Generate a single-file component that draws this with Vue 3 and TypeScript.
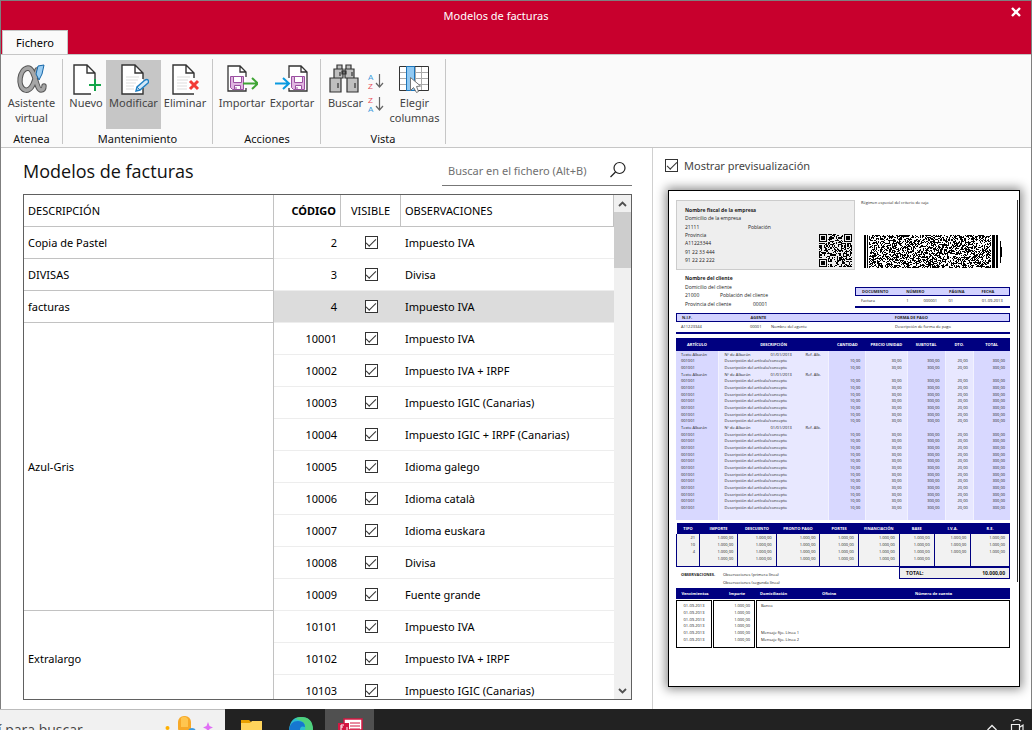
<script setup lang="ts">
import { ref } from 'vue'

interface Model { code: number; notes: string; group?: string; span?: number }

const models = ref<Model[]>([
  { code: 2, notes: 'Impuesto IVA', group: 'Copia de Pastel', span: 1 },
  { code: 3, notes: 'Divisa', group: 'DIVISAS', span: 1 },
  { code: 4, notes: 'Impuesto IVA', group: 'facturas', span: 1 },
  { code: 10001, notes: 'Impuesto IVA', group: 'Azul-Gris', span: 9 },
  { code: 10002, notes: 'Impuesto IVA + IRPF' },
  { code: 10003, notes: 'Impuesto IGIC (Canarias)' },
  { code: 10004, notes: 'Impuesto IGIC + IRPF (Canarias)' },
  { code: 10005, notes: 'Idioma galego' },
  { code: 10006, notes: 'Idioma català' },
  { code: 10007, notes: 'Idioma euskara' },
  { code: 10008, notes: 'Divisa' },
  { code: 10009, notes: 'Fuente grande' },
  { code: 10101, notes: 'Impuesto IVA', group: 'Extralargo', span: 3 },
  { code: 10102, notes: 'Impuesto IVA + IRPF' },
  { code: 10103, notes: 'Impuesto IGIC (Canarias)' },
])
const selected = ref(4)
const showPreview = ref(true)
const query = ref('')

const deliveryRows = [0, 3, 11]
const lines = Array.from({ length: 24 }, (_, i) => ({ id: i, delivery: deliveryRows.includes(i) }))

const totalHeads = ['TIPO', 'IMPORTE', 'DESCUENTO', 'PRONTO PAGO', 'PORTES', 'FINANCIACIÓN', 'BASE', 'I.V.A.', 'R.E.']
const totalRows = ['21', '10', '4', ''].map((rate) => [
  rate, ...Array(6).fill('1.000,00'), rate ? '1.000,00' : '', rate ? '1.000,00' : '',
] as string[])
const dues = ['Banco', '', '', '', 'Mensaje fijo. Línea 1', 'Mensaje fijo. Línea 2']

function noise(seed: number) {
  let s = seed
  return () => {
    s = (s * 1103515245 + 12345) % 2147483648
    return s / 2147483648
  }
}

function qrPath(n: number): string {
  const rnd = noise(77)
  let d = ''
  for (let y = 0; y < n; y++) {
    for (let x = 0; x < n; x++) {
      const on = rnd() > 0.48
      const corner = (x < 8 && y < 8) || (x > n - 9 && y < 8) || (x < 8 && y > n - 9)
      if (on && !corner) d += `M${x} ${y}h1v1h-1z`
    }
  }
  for (const [a, b] of [[0, 0], [n - 7, 0], [0, n - 7]]) {
    d += `M${a} ${b}h7v1h-7zM${a} ${b + 6}h7v1h-7zM${a} ${b}h1v7h-1zM${a + 6} ${b}h1v7h-1zM${a + 2} ${b + 2}h3v3h-3z`
  }
  return d
}

function stackedBarcode(): string {
  const rnd = noise(1234)
  let d = 'M0 0h2v33h-2zM3 0h1v33h-1zM128 0h3v33h-3zM132 0h2v33h-2zM136 6h1v22h-1zM137 12h1v10h-1z'
  for (let y = 0; y < 33; y++) {
    for (let x = 5; x < 127; x++) if (rnd() > 0.5) d += `M${x} ${y}h1v1h-1z`
  }
  return d
}
const qr = qrPath(29)
const barcode = stackedBarcode()
</script>

<template>
  <div class="screen">
    <div class="window">
      <header class="titlebar">
        <h1>Modelos de facturas</h1>
        <button class="close" aria-label="Cerrar">
          <svg width="10" height="10" viewBox="0 0 10 10"><path d="M1 1l8 8M9 1l-8 8" stroke="#fff" stroke-width="2.4" /></svg>
        </button>
        <button class="tab">Fichero</button>
      </header>

      <nav class="ribbon">
        <section class="group">
          <div class="tools">
            <button class="tool assistant">
              <svg width="32" height="32" viewBox="0 0 32 32" fill="none">
                <path d="M21 7C18 25 13 28 9 27 1 24 3 6 12 5c7 0 8 22 13 22 2 0 3-1 3-4" stroke="#555" stroke-width="5.4" stroke-linecap="round" />
                <path d="M21 7C18 25 13 28 9 27 1 24 3 6 12 5c7 0 8 22 13 22 2 0 3-1 3-4" stroke="#a6a6a6" stroke-width="3.4" stroke-linecap="round" />
                <path d="M22 3l6-1-2 9-3 6-3-6z" fill="#9bcdf2" stroke="#1667a8" />
              </svg>
              <span>Asistente virtual</span>
            </button>
          </div>
          <h2>Atenea</h2>
        </section>

        <section class="group">
          <div class="tools">
            <button class="tool new">
              <svg width="30" height="32" viewBox="0 0 30 32" fill="none">
                <path d="M3 2h13l8 8v21H3z" fill="#fff" />
                <path d="M24 16v-6l-8-8H3v29h17M16 2v8h8" stroke="#333" stroke-width="1.4" />
                <path d="M24 16v12M18 22h12" stroke="#13a549" stroke-width="2" />
              </svg>
              <span>Nuevo</span>
            </button>
            <button class="tool edit active">
              <svg width="30" height="32" viewBox="0 0 30 32" fill="none">
                <path d="M3 2h13l8 8v21H3z" fill="#fff" />
                <path d="M24 16v-6l-8-8H3v29h21v-6M16 2v8h8" stroke="#333" stroke-width="1.4" />
                <path d="M7 14h13M7 17h12M7 20h10M7 23h8M7 26h8" stroke="#ddd" />
                <path d="M17 28l1-4 8-7q2-1 3 0 1 2 0 3l-8 7z" fill="#d4e8f8" stroke="#1d7fc3" stroke-width="1.4" />
                <path d="M18 24l3 3" stroke="#1d7fc3" />
              </svg>
              <span>Modificar</span>
            </button>
            <button class="tool remove">
              <svg width="30" height="32" viewBox="0 0 30 32" fill="none">
                <path d="M3 2h13l8 8v21H3z" fill="#fff" />
                <path d="M24 15v-5l-8-8H3v29h21M16 2v8h8" stroke="#333" stroke-width="1.4" />
                <path d="M7 14h13M7 17h11M7 20h10M7 23h10M7 26h10" stroke="#ddd" />
                <path d="M20 18l8 8M28 18l-8 8" stroke="#f23b35" stroke-width="3" />
              </svg>
              <span>Eliminar</span>
            </button>
          </div>
          <h2>Mantenimiento</h2>
        </section>

        <section class="group actions">
          <div class="tools">
            <button class="tool wide">
              <svg width="32" height="32" viewBox="0 0 32 32" fill="none">
                <path d="M2 3h12l6 6v19H2z" fill="#fff" />
                <path d="M20 14V9l-6-6H2v25h18v-3M14 3v6h6" stroke="#333" stroke-width="1.3" />
                <path d="M4.500 13.500h13v13h-11l-2-2z" fill="#e0b5e0" stroke="#9a4fa0" />
                <path d="M7.500 13.500h8v6h-8zM8.500 22.500h6v4h-6z" fill="#fff" stroke="#9a4fa0" /><path d="M10 24v2" stroke="#9a4fa0" />
                <path d="M17 20.500h14M26 15l6 5.500-6 5.500" stroke="#3fa535" stroke-width="2" />
              </svg>
              <span>Importar</span>
            </button>
            <button class="tool wide">
              <svg width="34" height="32" viewBox="0 0 34 32" fill="none">
                <path d="M14 3h12l6 6v19H14z" fill="#fff" />
                <path d="M14 15V3h12l6 6v19H14v-3M26 3v6h6" stroke="#333" stroke-width="1.3" />
                <path d="M16.500 13.500h13v13h-11l-2-2z" fill="#e0b5e0" stroke="#9a4fa0" />
                <path d="M19.500 13.500h8v6h-8zM20.500 22.500h6v4h-6z" fill="#fff" stroke="#9a4fa0" /><path d="M22 24v2" stroke="#9a4fa0" />
                <path d="M0 20.500h13M8 15l6 5.500-6 5.500" stroke="#0a9ae0" stroke-width="2" />
              </svg>
              <span>Exportar</span>
            </button>
          </div>
          <h2>Acciones</h2>
        </section>

        <section class="group">
          <div class="tools">
            <button class="tool find">
              <svg width="35" height="32" viewBox="0 0 35 32" fill="#bfbfbf" stroke="#333" stroke-width="1.2">
                <path d="M9 2h5v4H9zM18 2h5v4h-5zM6 6h9v9H6zM17 6h9v9h-9zM14 8h4v3h-4zM2 15h11v14H2zM19 15h11v14H19zM10 20v5M27 20v5M12 9v4M24 9v4" />
              </svg>
              <span>Buscar</span>
            </button>
            <div class="sorts">
              <button aria-label="Orden ascendente">
                <svg width="18" height="21" viewBox="0 0 18 21"><text x="1" y="9" fill="#3d9bdc">A</text><text x="1" y="18" fill="#e8505b">Z</text><path d="M12.500 3v13M9 12l3.500 4 3.500-4" fill="none" stroke="#666" stroke-width="1.2" /></svg>
              </button>
              <button aria-label="Orden descendente">
                <svg width="18" height="21" viewBox="0 0 18 21"><text x="1" y="9" fill="#e8505b">Z</text><text x="1" y="18" fill="#3d9bdc">A</text><path d="M12.500 3v13M9 12l3.500 4 3.500-4" fill="none" stroke="#666" stroke-width="1.2" /></svg>
              </button>
            </div>
            <button class="tool columns">
              <svg width="34" height="32" viewBox="0 0 34 32" fill="none">
                <path d="M1.500 3.500h29v24h-29z" fill="#fff" />
                <path d="M2 9.500h28M2 15.500h28M2 21.500h28M23.500 4v23M17.500 4v23" stroke="#aaa" />
                <path d="M1.500 3.500h29v24h-29z" stroke="#333" />
                <path d="M8.500 3.500h8v24h-8z" fill="#91c9f2" stroke="#1b75bb" />
                <path d="M12.500 14.500v13l3-3 3 5 2-1-2-5 4-.5z" fill="#fff" stroke="#777" />
              </svg>
              <span>Elegir columnas</span>
            </button>
          </div>
          <h2>Vista</h2>
        </section>
      </nav>

      <main class="content">
        <section class="list">
          <div class="list-head">
            <h3>Modelos de facturas</h3>
            <label class="search">
              <input v-model="query" type="text" placeholder="Buscar en el fichero (Alt+B)" aria-label="Buscar en el fichero" />
              <svg width="18" height="18" viewBox="0 0 18 18" fill="none" stroke="#222"><circle cx="10.500" cy="7" r="5.500" stroke-width="1.2" /><path d="M6.500 11l-5 5" stroke-width="1.3" /></svg>
            </label>
          </div>
          <div class="grid-box">
            <div class="grid-view">
              <table class="models">
                <colgroup><col class="c-desc" /><col class="c-code" /><col class="c-vis" /><col /></colgroup>
                <thead>
                  <tr><th>DESCRIPCIÓN</th><th class="code sorted">CÓDIGO</th><th class="vis">VISIBLE</th><th>OBSERVACIONES</th></tr>
                </thead>
                <tbody>
                  <tr v-for="m in models" :key="m.code" :class="{ selected: m.code === selected }" @click="selected = m.code">
                    <td v-if="m.group" :rowspan="m.span" class="desc">{{ m.group }}</td>
                    <td class="code">{{ m.code }}</td>
                    <td class="vis"><input type="checkbox" checked :aria-label="'Visible ' + m.code" /></td>
                    <td>{{ m.notes }}</td>
                  </tr>
                </tbody>
              </table>
            </div>
            <div class="scrollbar">
              <button aria-label="Subir"><svg width="9" height="6" viewBox="0 0 9 6"><path d="M1 5l3.500-3.500L8 5" fill="none" stroke="#505050" stroke-width="1.8" /></svg></button>
              <div class="track"><div class="thumb"></div></div>
              <button aria-label="Bajar"><svg width="9" height="6" viewBox="0 0 9 6"><path d="M1 1l3.500 3.500L8 1" fill="none" stroke="#505050" stroke-width="1.8" /></svg></button>
            </div>
          </div>
        </section>

        <aside class="preview">
          <label class="toggle"><input v-model="showPreview" type="checkbox" />Mostrar previsualización</label>
          <article v-if="showPreview" class="sheet">
            <div class="top">
              <div class="parties">
                <div class="company">
                  <b>Nombre fiscal de la empresa</b>
                  <span>Domicilio de la empresa</span>
                  <span class="pair"><i>21111</i><i>Población</i></span>
                  <span>Provincia</span>
                  <span>A11223344</span>
                  <span>91 22 33 444</span>
                  <span>91 22 22 222</span>
                  <svg class="qr" viewBox="0 0 29 29" shape-rendering="crispEdges"><path :d="qr" /></svg>
                </div>
                <div class="client">
                  <b>Nombre del cliente</b>
                  <span>Domicilio del cliente</span>
                  <span class="pair near"><i>21000</i><i>Población del cliente</i></span>
                  <span class="pair far"><i>Provincia del cliente</i><i>00001</i></span>
                </div>
              </div>
              <div class="document">
                <p class="regime">Régimen especial del criterio de caja</p>
                <svg class="barcode" viewBox="0 0 138 33" preserveAspectRatio="none" shape-rendering="crispEdges"><path :d="barcode" /></svg>
                <div class="strip doc-cols"><b>DOCUMENTO</b><b>NÚMERO</b><b></b><b>PÁGINA</b><b>FECHA</b></div>
                <div class="values doc-cols"><span>Factura</span><span>1</span><span>000001</span><span>01</span><span>01-09-2013</span></div>
              </div>
            </div>
            <div class="strip tax-cols"><b>N.I.F.</b><b>AGENTE</b><b></b><b>FORMA DE PAGO</b></div>
            <div class="values tax-cols"><span>A11223344</span><span>00001</span><span>Nombre del agente</span><span>Descripción de forma de pago</span></div>

            <table class="items">
              <colgroup><col class="i1" /><col class="i2" /><col class="i3" /><col class="i4" /><col class="i5" /><col class="i6" /><col class="i7" /></colgroup>
              <thead><tr><th>ARTÍCULO</th><th>DESCRIPCIÓN</th><th>CANTIDAD</th><th>PRECIO UNIDAD</th><th>SUBTOTAL</th><th>DTO.</th><th>TOTAL</th></tr></thead>
              <tbody>
                <tr v-for="l in lines" :key="l.id">
                  <template v-if="l.delivery">
                    <td>Texto Albarán</td><td><span class="delivery"><i>Nº de Albarán</i><i>01/01/2013</i><i>Ref. Alb.</i></span></td><td></td><td></td><td></td><td></td><td></td>
                  </template>
                  <template v-else>
                    <td>001001</td><td>Descripción del artículo/concepto</td><td>10,00</td><td>30,00</td><td>300,00</td><td>20,00</td><td>300,00</td>
                  </template>
                </tr>
              </tbody>
              <tfoot><tr><td v-for="n in 7" :key="n"></td></tr></tfoot>
            </table>

            <table class="totals">
              <colgroup><col class="t1" /><col class="t2" /><col class="t2" /><col class="t3" /><col class="t2" /><col class="t4" /><col class="t5" /><col class="t6" /><col class="t7" /></colgroup>
              <thead><tr><th v-for="h in totalHeads" :key="h">{{ h }}</th></tr></thead>
              <tbody><tr v-for="(r, i) in totalRows" :key="i"><td v-for="(c, j) in r" :key="j">{{ c }}</td></tr></tbody>
              <tfoot><tr><td v-for="n in 9" :key="n"></td></tr></tfoot>
            </table>
            <div class="summary">
              <div class="remarks"><b>OBSERVACIONES.</b><span>Observaciones (primera línea)</span><span>Observaciones (segunda línea)</span></div>
              <div class="grand"><span>TOTAL:</span><span>10.000,00</span></div>
            </div>

            <div class="dues">
              <div class="dues-head"><b>Vencimientos</b><b>Importe</b><b>Domiciliación</b><b>Oficina</b><b>Número de cuenta</b></div>
              <div class="dues-body">
                <div class="dates"><span v-for="(d, i) in dues" :key="i">01-09-2013</span></div>
                <div class="amounts"><span v-for="(d, i) in dues" :key="i">1.000,00</span></div>
                <div class="bank"><span v-for="(d, i) in dues" :key="i">{{ d }}</span></div>
              </div>
            </div>
            <div class="edge"></div>
          </article>
        </aside>
      </main>
    </div>

    <footer class="taskbar">
      <div class="task-search">
        <span>í para buscar</span>
        <svg width="50" height="22" viewBox="0 0 50 22">
          <circle cx="3.500" cy="18" r="2" fill="#ffb000" />
          <rect x="14" y="6" width="13" height="18" rx="6" fill="#f7a928" /><path d="M17 8q4-3 7 1v8h-7z" fill="#ffc64f" />
          <circle cx="28" cy="22" r="4" fill="#3d9be0" />
          <path d="M44 12l1.500 4 3.500 1.500-3.500 1.500-1.500 4-1.500-4-3.500-1.500 3.500-1.500z" fill="#e06ef5" />
        </svg>
      </div>
      <button class="task" aria-label="Explorador de archivos">
        <svg width="24" height="21" viewBox="0 0 24 21"><path d="M1 11h8l2 2v8H1z" fill="#e8a000" /><path d="M1 14h9l2-2h10v9H1z" fill="#ffd45c" /></svg>
      </button>
      <button class="task" aria-label="Edge">
        <svg width="26" height="21" viewBox="0 0 26 21"><path d="M1 21Q2 8 13 8t12 13z" fill="#2dbdd0" /><path d="M13 8q12 0 12 13h-8q2-9-10-11 2-2 6-2z" fill="#4fd17c" /><path d="M1 21q1-9 9-9 7 0 7 6-5-2-5 3z" fill="#1677d0" /></svg>
      </button>
      <button class="task current" aria-label="Facturas">
        <svg width="26" height="21" viewBox="0 0 26 21"><path d="M7 10h18v11H7z" fill="#fff" stroke="#d31742" stroke-width="1.5" /><path d="M13 14h10M13 17h10M13 20h10" stroke="#d31742" /><path d="M1 14h11v7H1z" fill="#d31742" /><path d="M7 16H4v5M4 18h2M10 21v-3" stroke="#fff" fill="none" /></svg>
      </button>
      <div class="tray">
        <svg width="12" height="21" viewBox="0 0 12 21" fill="none" stroke="#eee"><path d="M1.500 21L6 16.500l4.500 4.500" stroke-width="1.3" /></svg>
        <svg width="14" height="21" viewBox="0 0 14 21" fill="none" stroke="#eee"><path d="M3 12q4-3 8 0M1.500 15.500h8v7h-8zM10 18l3-2v6" stroke-width="1.2" /></svg>
      </div>
    </footer>
  </div>
</template>

<style>
body { margin: 0; overflow: hidden; }
</style>

<style scoped>
* { box-sizing: border-box; }
h1, h2, h3, p { margin: 0; font-weight: 400; }
button { font: inherit; color: inherit; background: none; border: 0; padding: 0; }
i { font-style: normal; }
.screen { height: 100vh; display: flex; flex-direction: column; font: 11px/15px "Noto Sans", "Open Sans", sans-serif; color: #111; background: #fff; }
.window { flex: 1; min-height: 0; display: flex; flex-direction: column; border: 1px solid #7f7f7f; border-bottom: 0; }

.titlebar { background: #c8002d; display: grid; grid-template-columns: 1fr 30px; color: #fff; }
.titlebar h1 { font-size: 11px; line-height: 29px; text-align: center; padding-right: 10px; }
.close { height: 22px; display: grid; place-items: center; }
.tab { justify-self: start; width: 66px; height: 24px; margin-left: 1px; background: #fafafa; border: 1px solid #c6c6c6; border-bottom: 0; color: #000; }

.ribbon { display: flex; height: 94px; background: #fafafa; border-top: 1px solid #c6c6c6; border-bottom: 1px solid #c6c6c6; padding-top: 4px; }
.group { height: 85px; padding: 1px 3px 0; border-right: 1px solid #c6c6c6; display: flex; flex-direction: column; justify-content: space-between; }
.group h2 { font-size: 11px; line-height: 16px; text-align: center; margin-bottom: -3px; }
.actions { padding-left: 4px; }
.tools { display: flex; height: 69px; }
.tool { display: flex; flex-direction: column; align-items: center; color: #444; padding-top: 3px; }
.tool span { line-height: 15px; }
.tool.active { background: #c6c6c6; }
.assistant, .edit, .columns { width: 55px; }
.new { width: 40px; }
.remove { width: 48px; }
.wide { width: 50px; }
.find { width: 43px; }
.sorts { width: 20px; display: flex; flex-direction: column; gap: 2px; padding-top: 11px; }
.sorts svg { display: block; }
.sorts text { font: 8px "Liberation Sans", sans-serif; }

.content { flex: 1; min-height: 0; display: grid; grid-template-columns: 652fr 378fr; }
.list { padding: 3px 20px 9px 22px; display: flex; flex-direction: column; min-height: 0; border-right: 1px solid #d0d0d0; }
.list-head { display: flex; justify-content: space-between; align-items: center; height: 39px; margin-bottom: 4px; }
.list-head h3 { font: 18px/26px "Open Sans", sans-serif; }
.search { display: flex; align-items: center; width: 190px; height: 30px; border-bottom: 1px solid #777; padding: 0 5px 0 6px; }
.search input { flex: 1; min-width: 0; border: 0; padding: 0; outline: 0; background: none; font: inherit; }
.search input::placeholder { color: #707070; opacity: 1; }
.grid-box { flex: 1; min-height: 0; display: flex; border: 1px solid #606060; }
.grid-view { flex: 1; overflow: hidden; }
.models { width: 100%; border-collapse: separate; border-spacing: 0; table-layout: fixed; line-height: 16px; color: #000; }
.c-desc { width: 250px; }
.c-code { width: 67px; }
.c-vis { width: 60px; }
.models th, .models td { height: 32px; padding: 0 4px; text-align: left; font-weight: 400; border-bottom: 1px solid #ededed; white-space: nowrap; }
.models th, .models .desc { border-bottom: 1px solid #c2c2c2; border-right: 1px solid #c2c2c2; background: #fff; }
.models .code { text-align: right; }
.models .sorted { font-weight: 700; }
.models .vis { text-align: center; }
.models .selected td:not(.desc) { background: #dcdcdc; }
input[type="checkbox"] { appearance: none; width: 13px; height: 13px; margin: 0; border: 1px solid #333; background: #fff; display: grid; place-items: center; }
.vis input[type="checkbox"] { margin: 0 auto; }
input[type="checkbox"]:checked::before { content: ""; width: 9px; height: 4px; border: solid #333; border-width: 0 0 1px 1px; transform: translateY(-1px) rotate(-45deg); }
.scrollbar { width: 17px; background: #f0f0f0; display: flex; flex-direction: column; }
.scrollbar button { height: 17px; display: grid; place-items: center; }
.track { flex: 1; }
.thumb { height: 12%; background: #cdcdcd; }

.preview { padding: 9px 11px 0 12px; }
.toggle { display: flex; align-items: center; gap: 6px; height: 16px; color: #444; }
.sheet { position: relative; height: 497px; margin: 17px 0 0 3px; padding: 9px 9px 0 7px; background: #fff; border: 1px solid #000; box-shadow: 0 0 10px 2px #888; font: 5px/6px "Open Sans", sans-serif; color: #222; }
.sheet span, .sheet b, .sheet th, .sheet td, .sheet p { white-space: nowrap; }
.edge { position: absolute; right: 1px; top: 9px; height: 382px; width: 1px; background: #333; }
.top { display: grid; grid-template-columns: 179fr 155fr; height: 107px; }
.company { position: relative; height: 70px; padding: 5px 8px; background: #eee; border: 1px solid #ccc; display: grid; grid-auto-rows: 1fr; align-items: center; }
.qr { position: absolute; right: 2px; bottom: 2px; width: 33px; height: 33px; }
.pair { display: grid; grid-template-columns: 63px 1fr; }
.near { grid-template-columns: 35px 1fr; }
.far { grid-template-columns: 68px 1fr; }
.client { height: 34px; padding: 0 9px; margin-top: 4px; display: grid; grid-auto-rows: 1fr; align-items: center; }
.document { display: flex; flex-direction: column; }
.regime { padding-left: 6px; font-size: 4px; }
.barcode { width: 138px; height: 33px; margin: 29px 0 19px 9px; flex: none; }
.strip { display: grid; align-items: center; height: 9px; background: #d2d2ff; border: 1px solid #000080; font-size: 4px; }
.values { display: grid; align-items: center; height: 12px; border-bottom: 2px solid #000080; font-size: 4px; }
.doc-cols { grid-template-columns: 45fr 17fr 25fr 33fr 28fr; padding-left: 6px; }
.tax-cols { grid-template-columns: 69fr 21fr 124fr 115fr; padding-left: 5px; }
.top + .strip { margin-top: 6px; }
.sheet table { border-collapse: collapse; table-layout: fixed; width: 100%; font-size: 4px; }
.sheet th { background: #000080; color: #fff; text-align: center; padding: 0; }
.sheet td { padding: 0 5px; text-align: right; line-height: 5px; }
.sheet .items { margin-top: 4px; height: 182px; background: linear-gradient(90deg, #d8d8ff 0 12.6%, #e8e8ff 12.6% 45.8%, #d8d8ff 45.8% 56.8%, #e8e8ff 56.8% 69.2%, #d8d8ff 69.2% 80.6%, #e8e8ff 80.6% 89%, #d8d8ff 89%); }
.items th { height: 13px; }
.items td { border-left: 1px solid #f2f2ff; }
.items td:nth-child(1), .items td:nth-child(2) { text-align: left; }
.items td:nth-child(1) { border-left: 0; }
.items td:nth-child(2) { padding-left: 6px; }
.items tfoot td { height: 9px; }
.delivery { display: grid; grid-template-columns: 46px 35px 1fr; }
.i1 { width: 12.6%; } .i2 { width: 33.2%; } .i3 { width: 11%; } .i4 { width: 12.4%; } .i5 { width: 11.4%; } .i6 { width: 8.4%; } .i7 { width: 11%; }
.sheet .totals { margin-top: 3px; height: 44px; }
.totals th { height: 11px; }
.totals td { background: #f2f2f2; border-left: 1px solid #000080; border-right: 1px solid #000080; padding-right: 4px; }
.totals tfoot td { height: 5px; border-bottom: 1px solid #000080; }
.t1 { width: 6.9%; } .t2 { width: 11.5%; } .t3 { width: 13.2%; } .t4 { width: 12.3%; } .t5 { width: 10.5%; } .t6 { width: 11%; } .t7 { width: 11.6%; }
.summary { display: grid; grid-template-columns: 223fr 111fr; height: 21px; align-items: start; }
.remarks { display: grid; grid-template-columns: 42px 1fr; row-gap: 2px; padding: 5px 0 0 5px; font-size: 4px; }
.remarks span:last-child { grid-column: 2; }
.grand { display: flex; justify-content: space-between; align-items: center; height: 12px; padding: 0 4px 0 6px; background: #eee; border: 1px solid #000080; font-weight: 700; color: #111; }
.dues { font-size: 4px; }
.dues-head { display: grid; grid-template-columns: 38px 46px 62px 93px 1fr; align-items: center; height: 11px; background: #000080; color: #fff; }
.dues-head b:nth-child(-n+2) { text-align: center; }
.dues-body { display: grid; grid-template-columns: 36px 42px 1fr; column-gap: 1px; height: 48px; margin-top: 1px; }
.dues-body > div { border: 1px solid #000; display: grid; grid-auto-rows: 1fr; align-items: center; padding: 2px 4px 4px; }
.amounts { text-align: right; }
.dates { text-align: center; }

.taskbar { height: 21px; overflow: hidden; display: flex; background: #222; }
.task-search { width: 225px; background: #f1f1f1; border-top: 1px solid #bbb; display: flex; justify-content: space-between; padding: 0 11px 0 0; color: #444; }
.task-search span { font: 14px/39px "Open Sans", sans-serif; margin-left: -2px; }
.task { width: 49px; display: flex; justify-content: center; align-items: flex-start; }
.task:nth-of-type(1) { margin-left: 2px; }
.current { background: #505050; }
.tray { margin-left: auto; display: flex; gap: 12px; padding-right: 8px; }
</style>
